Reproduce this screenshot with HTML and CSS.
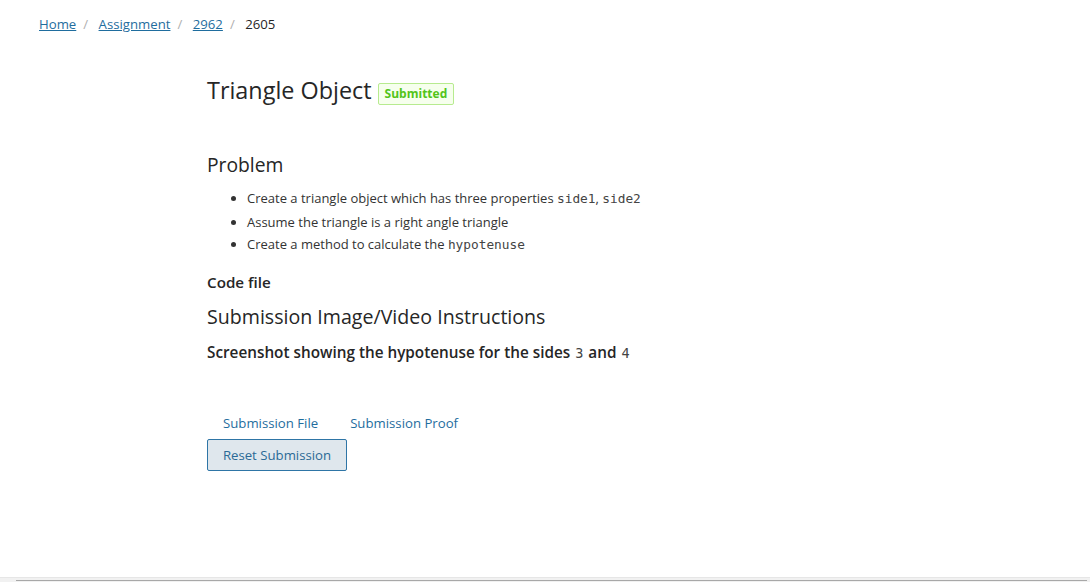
FILE: index.html
```html
<!DOCTYPE html>
<html lang="en">
<head>
<meta charset="utf-8">
<title>Triangle Object</title>
<link rel="stylesheet" href="styles.css">
</head>
<body>
<nav class="crumbs">
  <a href="#">Home</a><span class="sep">/</span>
  <a href="#">Assignment</a><span class="sep">/</span>
  <a href="#">2962</a><span class="sep">/</span>
  <span class="current">2605</span>
</nav>
<main class="content">
  <div class="title-row">
    <h1 class="title">Triangle Object</h1>
    <span class="tag">Submitted</span>
  </div>
  <h2 class="h-problem">Problem</h2>
  <ul class="list">
    <li>Create a triangle object which has three properties <code>side1</code>, <code>side2</code></li>
    <li>Assume the triangle is a right angle triangle</li>
    <li>Create a method to calculate the <code>hypotenuse</code></li>
  </ul>
  <h3 class="h-code">Code file</h3>
  <h2 class="h-sub">Submission Image/Video Instructions</h2>
  <p class="instr">Screenshot showing the hypotenuse for the sides <code>3</code> and <code>4</code></p>
  <div class="tabs">
    <a href="#" class="tab">Submission File</a>
    <a href="#" class="tab">Submission Proof</a>
  </div>
  <button class="reset">Reset Submission</button>
</main>
<div class="hscroll"><div class="thumb"></div></div>
</body>
</html>
```
FILE: styles.css
```css
html, body {
  margin: 0;
  padding: 0;
  background: #fff;
}
body {
  font-family: "Open Sans", "Noto Sans", sans-serif;
  color: #262626;
  height: 582px;
  overflow: hidden;
}
.crumbs {
  padding: 14px 0 0 39px;
  font-size: 13.2px;
  line-height: 20px;
  color: #262626;
}
.crumbs a {
  color: #1f6d9e;
  text-decoration: underline;
}
.crumbs .sep {
  color: #b0b0b0;
  margin: 0 7px;
}
.content {
  padding-left: 207px;
}
.title-row {
  display: flex;
  align-items: center;
  gap: 6px;
  margin-top: 40px;
}
.title {
  margin: 0;
  font-size: 23.4px;
  font-weight: 400;
  line-height: 32px;
  color: #262626;
}
.tag {
  font-size: 12px;
  font-weight: 700;
  color: #52c41a;
  background: #f6ffed;
  border: 1px solid #b7eb8f;
  border-radius: 2px;
  padding: 1px 6px;
  line-height: 18px;
  margin-top: 8px;
}
.h-problem {
  margin: 45px 0 0;
  font-size: 19.3px;
  font-weight: 400;
  line-height: 28px;
}
.list {
  margin: 8px 0 0;
  padding-left: 40px;
  font-size: 13px;
  line-height: 22.5px;
  color: #333;
}
code {
  font-family: "DejaVu Sans Mono", monospace;
  font-size: 12.8px;
  color: #444;
}
.h-code {
  margin: 13px 0 0;
  font-size: 15.2px;
  font-weight: 600;
  line-height: 24px;
}
.h-sub {
  margin: 9px 0 0;
  font-size: 19.6px;
  font-weight: 400;
  line-height: 28px;
}
.instr {
  margin: 9px 0 0;
  font-size: 15.3px;
  font-weight: 600;
  line-height: 24px;
}
.instr code {
  font-weight: 400;
  font-size: 13.5px;
  margin: 0 1px;
}
.tabs {
  display: flex;
  gap: 32px;
  margin-top: 47px;
  padding-left: 16px;
}
.tab {
  font-size: 13.2px;
  line-height: 22px;
  color: #1f6d9e;
  text-decoration: none;
}
.reset {
  margin-top: 5px;
  width: 140px;
  height: 32px;
  font-family: inherit;
  font-size: 13.2px;
  color: #2b6a96;
  background: #dfe7ed;
  border: 1px solid #2e75a6;
  border-radius: 2px;
  padding: 0;
}
.hscroll {
  position: fixed;
  left: 0;
  right: 0;
  bottom: 0;
  height: 4px;
  background: #f1f1f1;
  border-top: 1px solid #e6e6e6;
}
.hscroll .thumb {
  margin: 2px 3px 0 16px;
  height: 1px;
  background: #a8a8a8;
}
```
